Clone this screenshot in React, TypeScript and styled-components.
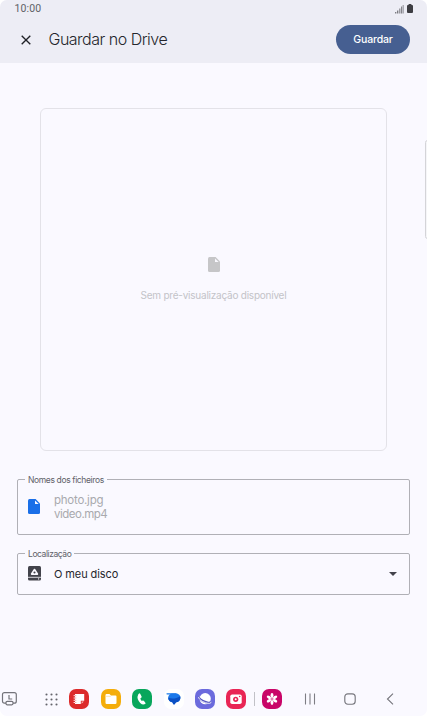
import React from 'react';
import styled, { createGlobalStyle } from 'styled-components';

interface FieldProps {
  label: string;
  height: number;
  labelSpacing: number;
  children: React.ReactNode;
}

function Field({ label, height, labelSpacing, children }: FieldProps) {
  return (
    <FieldBox $height={height}>
      <Legend $spacing={labelSpacing}>{label}</Legend>
      {children}
    </FieldBox>
  );
}

function FileIcon({ color, width, height }: { color: string; width: number; height: number }) {
  return (
    <svg width={width} height={height} viewBox="0 0 12 15" preserveAspectRatio="none">
      <path d="M1.5 0H7.6L12 4.4V13.5Q12 15 10.5 15H1.5Q0 15 0 13.5V1.5Q0 0 1.5 0Z" fill={color} />
      <path d="M7 1.4V5H10.7Z" fill="#faf9ff" />
    </svg>
  );
}

function DiskIcon() {
  return (
    <svg width="13" height="15" viewBox="0 0 13 15">
      <rect width="13" height="14.4" rx="1.5" fill="#42434b" />
      <path d="M6.5 3.7L9.2 8.1H3.8Z" fill="none" stroke="#faf9ff" strokeWidth="2" strokeLinejoin="round" />
      <circle cx="6.5" cy="6.6" r="1" fill="#42434b" />
      <path d="M0 11.3H13" stroke="#faf9ff" strokeWidth="0.8" />
      <circle cx="10.6" cy="12.9" r="0.65" fill="#faf9ff" />
    </svg>
  );
}

function StatusIcons() {
  return (
    <svg width="19" height="10" viewBox="0 0 19 10">
      <path d="M0.7 8V9.5M2.7 6.5V9.5" stroke="#77777d" strokeWidth="1.3" />
      <path d="M4.8 4.5V9.5M6.6 2.5V9.5" stroke="#85858b" strokeWidth="1.2" />
      <path d="M8.2 1V9.5" stroke="#77777d" strokeWidth="0.8" />
      <path d="M13.6 0H16.4V0.9H17Q18 0.9 18 1.9V8Q18 9 17 9H13Q12 9 12 8V1.9Q12 0.9 13 0.9H13.6Z" fill="#3d3d42" />
    </svg>
  );
}

function CaptureIcon() {
  return (
    <svg width="18" height="16" viewBox="0 0 18 16" fill="none" stroke="#74747b" strokeWidth="1.2">
      <path d="M6 12.2H4.5Q2.5 12.2 2.5 10.2V3.6Q2.5 1.6 4.5 1.6H14.3Q16.3 1.6 16.3 3.6V10.2Q16.3 12.2 14.3 12.2H13" />
      <path d="M9 4V8H12.2" />
      <rect x="6" y="10.4" width="7" height="3.4" rx="1.2" />
    </svg>
  );
}

function AppsIcon() {
  const steps = [1.2, 6.2, 11.2];
  return (
    <svg width="13" height="13" viewBox="0 0 13 13" fill="#64646b">
      {steps.map((y) => steps.map((x) => <circle key={`${x}-${y}`} cx={x + 0.3} cy={y + 0.3} r="1.05" />))}
    </svg>
  );
}

function NotesGlyph() {
  return (
    <svg width="20" height="20" viewBox="0 0 20 20">
      <path d="M6 5H15.2V11.8H11.8V15H6Z" fill="#fff" />
      <path d="M14.8 12.6H12.6V14.8Z" fill="#f7c3c1" />
      <path d="M4.6 6.7H6.4M4.6 9H6.4M4.6 11.3H6.4M4.6 13.5H6.4" stroke="#fff" strokeWidth="0.9" />
      <path d="M6.4 6.7H7.2M6.4 9H7.2M6.4 11.3H7.2M6.4 13.5H7.2" stroke="#df3333" strokeWidth="0.7" />
    </svg>
  );
}

function FilesGlyph() {
  return (
    <svg width="20" height="20" viewBox="0 0 20 20">
      <path d="M4.5 6Q4.5 5 5.5 5H8.5L10 6.5H14.5Q15.5 6.5 15.5 7.5V13.8Q15.5 15 14.3 15H5.7Q4.5 15 4.5 13.8Z" fill="#fff" />
      <path d="M5 7.3H9.5L10.3 6.5" fill="none" stroke="#f9cb65" strokeWidth="0.5" />
    </svg>
  );
}

function PhoneGlyph() {
  return (
    <svg width="20" height="20" viewBox="0 0 20 20">
      <path d="M8.2 4.8L9.6 7.5Q9.9 8.2 9.2 8.7L8.4 9.2Q8.5 10.8 9.8 12L10.8 11.6Q11.6 11.4 12 12L13.5 14.1Q13.8 14.8 13.1 15.1Q10.6 16.3 8.2 13.9Q4.2 9.7 6.2 5.6Q6.8 4.3 7.5 4.2Q8 4.2 8.2 4.8Z" fill="#fff" />
    </svg>
  );
}

function MessagesGlyph() {
  return (
    <svg width="20" height="20" viewBox="0 0 20 20">
      <path d="M3 4.8H12" stroke="#1b78ea" strokeWidth="1.2" strokeLinecap="round" />
      <rect x="4.2" y="4.4" width="12.2" height="8.8" rx="4.2" fill="#1b78ea" />
      <path d="M4.3 8.6C7.5 10.4 12.5 9.6 16.2 7.3C17 10.6 15 13.1 12.2 13.2L10.8 15.2C10.3 15.8 9.7 15.8 9.3 15.2L8 13.1C5.4 12.8 4.1 11 4.3 8.6Z" fill="#0b50c4" />
    </svg>
  );
}

function InternetGlyph() {
  return (
    <svg width="20" height="20" viewBox="0 0 20 20">
      <circle cx="10.2" cy="9.7" r="5.6" fill="#fff" />
      <path d="M4.6 7.6C3.2 8.6 5.2 10.6 8 12C11.6 13.8 15.8 14.5 15.9 12.6" fill="none" stroke="#5458c0" strokeWidth="2.1" />
      <path d="M4.4 7.4C2.6 8.2 4.2 10.7 7.8 12.6C11.8 14.6 16.4 15.2 16.2 12.8" fill="none" stroke="#f5f4ff" strokeWidth="0.9" />
    </svg>
  );
}

function CameraGlyph() {
  return (
    <svg width="20" height="20" viewBox="0 0 20 20">
      <rect x="4.3" y="5.5" width="11.4" height="9.5" rx="1.8" fill="#fff" />
      <circle cx="9.7" cy="10.3" r="2.6" fill="#e92555" />
      <circle cx="9.7" cy="10.3" r="1" fill="#fff" />
      <circle cx="13.7" cy="7.5" r="0.8" fill="#e92555" />
    </svg>
  );
}

function FlowerGlyph() {
  return (
    <svg width="20" height="20" viewBox="0 0 20 20">
      {[0, 60, 120, 180, 240, 300].map((angle) => (
        <ellipse key={angle} cx="10" cy="6.4" rx="1.45" ry="2.3" fill="#fff" transform={`rotate(${angle} 10 10)`} />
      ))}
      <path d="M10 7V13M7.4 8.5L12.6 11.5M12.6 8.5L7.4 11.5" stroke="#fff" strokeWidth="0.9" />
      <circle cx="10" cy="10" r="0.8" fill="#c90568" />
    </svg>
  );
}

function App() {
  return (
    <Screen>
      <GlobalStyle />
      <Header>
        <StatusBar>
          <Clock>10:00</Clock>
          <StatusIcons />
        </StatusBar>
        <TitleBar>
          <CloseButton aria-label="Fechar">
            <svg width="10" height="10" viewBox="0 0 10 10">
              <path d="M0.7 0.7L9.3 9.3M9.3 0.7L0.7 9.3" stroke="#202127" strokeWidth="1.35" />
            </svg>
          </CloseButton>
          <Title>Guardar no Drive</Title>
          <SaveButton>Guardar</SaveButton>
        </TitleBar>
      </Header>
      <Content>
        <Preview>
          <FileIcon color="#c6c6c8" width={12} height={15} />
          <PreviewText>Sem pré-visualização disponível</PreviewText>
        </Preview>
        <Form>
          <Field label="Nomes dos ficheiros" height={56} labelSpacing={-0.36}>
            <IconSlot><FileIcon color="#1a6fe8" width={12} height={15} /></IconSlot>
            <FileNames>
              <FileName $spacing={-0.25}>photo.jpg</FileName>
              <FileName $spacing={-0.5}>video.mp4</FileName>
            </FileNames>
          </Field>
          <Field label="Localização" height={42} labelSpacing={-0.42}>
            <IconSlot><DiskIcon /></IconSlot>
            <Location>O meu disco</Location>
            <svg width="8" height="4" viewBox="0 0 8 4">
              <path d="M0 0H8L4 4Z" fill="#42434b" />
            </svg>
          </Field>
        </Form>
        <EdgePanel />
      </Content>
      <NavBar>
        <CaptureIcon />
        <Spacer $width={27} />
        <AppsIcon />
        <Spacer $width={11.3} />
        <Dock>
          <AppTile $color="#dc2b2b"><NotesGlyph /></AppTile>
          <AppTile $color="#f4ad0b"><FilesGlyph /></AppTile>
          <AppTile $color="#08a65c"><PhoneGlyph /></AppTile>
          <AppTile $color="#ffffff"><MessagesGlyph /></AppTile>
          <AppTile $color="#6b6add"><InternetGlyph /></AppTile>
          <AppTile $color="#e92555"><CameraGlyph /></AppTile>
        </Dock>
        <Divider />
        <AppTile $color="#c90568"><FlowerGlyph /></AppTile>
        <Spacer $width={22} />
        <svg width="12" height="12" viewBox="0 0 12 12">
          <path d="M1.5 0.5V11.5M6 0.5V11.5M10.5 0.5V11.5" stroke="#7e7e84" strokeWidth="1.1" />
        </svg>
        <Spacer $width={28} />
        <svg width="12" height="12" viewBox="0 0 12 12">
          <rect x="0.8" y="0.8" width="10.4" height="10.4" rx="3" fill="none" stroke="#77777e" strokeWidth="1.15" />
        </svg>
        <Spacer $width={30} />
        <svg width="8" height="12" viewBox="0 0 8 12">
          <path d="M7 0.7L1.5 6L7 11.3" fill="none" stroke="#77777e" strokeWidth="1.15" />
        </svg>
      </NavBar>
    </Screen>
  );
}

export default App;

const GlobalStyle = createGlobalStyle`
  * {
    box-sizing: border-box;
  }

  body {
    margin: 0;
    background: white;
  }

  svg {
    display: block;
    flex-shrink: 0;
  }
`;

const Screen = styled.div`
  display: flex;
  flex-direction: column;

  width: 427px;
  height: 716px;
  overflow: hidden;

  border-radius: 7px;
  background: #faf9ff;
  color: #25262c;
  font-family: 'Open Sans', 'Noto Sans', sans-serif;
`;

const Header = styled.header`
  height: 62.5px;
  background: #ededf5;
`;

const StatusBar = styled.div`
  display: flex;
  align-items: center;
  justify-content: space-between;

  height: 17px;
  padding: 0 13px 0 14.5px;
`;

const Clock = styled.span`
  color: #606167;
  font-family: Roboto, sans-serif;
  font-size: 10.5px;
  letter-spacing: 0.1px;
`;

const TitleBar = styled.div`
  display: flex;
  align-items: center;

  height: 45px;
  padding: 0 17px 0 21px;
`;

const CloseButton = styled.button`
  display: flex;

  padding: 0;
  border: none;
  background: none;
`;

const Title = styled.h1`
  flex: 1;

  margin: -2px 0 0 17.5px;

  font-family: Inter, sans-serif;
  font-size: 16px;
  font-weight: 300;
  letter-spacing: -0.5px;
`;

const SaveButton = styled.button`
  width: 74px;
  height: 29px;
  padding: 0;

  border: none;
  border-radius: 15px;
  background: #465f91;
  color: white;
  font-family: Inter, sans-serif;
  font-size: 10.5px;
  font-weight: 500;
  letter-spacing: -0.15px;
`;

const Content = styled.main`
  position: relative;
  flex: 1;

  padding: 45.5px 17px 0;
`;

const Preview = styled.section`
  display: flex;
  flex-direction: column;
  align-items: center;

  height: 343px;
  margin: 0 23px;
  padding-top: 148px;

  border: 1px solid #e3e2e8;
  border-radius: 6px;
`;

const PreviewText = styled.p`
  margin: 16px 0 0;

  color: #c3c3c8;
  font-family: Inter, sans-serif;
  font-size: 10px;
  line-height: 14px;
  letter-spacing: -0.23px;
`;

const Form = styled.form`
  display: flex;
  flex-direction: column;
  gap: 18px;

  margin-top: 28px;
`;

const FieldBox = styled.div<{ $height: number }>`
  position: relative;

  display: flex;
  align-items: center;

  height: ${({ $height }) => $height}px;
  padding: 0 12px 0 10px;

  border: 1px solid #b0b0b6;
  border-radius: 2px;
`;

const Legend = styled.span<{ $spacing: number }>`
  position: absolute;
  top: -6px;
  left: 7px;

  padding: 0 3px;

  background: #faf9ff;
  color: #606168;
  font-family: Inter, sans-serif;
  font-size: 8.5px;
  line-height: 12px;
  letter-spacing: ${({ $spacing }) => $spacing}px;
`;

const IconSlot = styled.div`
  display: flex;

  width: 26px;
  margin-bottom: 1px;
`;

const FileNames = styled.div`
  color: #a9a9ae;
  font-family: Inter, sans-serif;
  font-size: 11.5px;
  line-height: 14px;
`;

const FileName = styled.div<{ $spacing: number }>`
  letter-spacing: ${({ $spacing }) => $spacing}px;
`;

const Location = styled.div`
  flex: 1;

  font-family: Inter, sans-serif;
  font-size: 11px;
  letter-spacing: -0.1px;
`;

const EdgePanel = styled.div`
  position: absolute;
  top: 77px;
  right: -3px;

  width: 5px;
  height: 99px;

  border: 1px solid #d4d4d8;
  border-radius: 3px;
  background: #f5f5f8;
`;

const NavBar = styled.nav`
  display: flex;
  align-items: center;

  height: 34px;
`;

const Dock = styled.div`
  display: flex;
  gap: 11.45px;
`;

const AppTile = styled.div<{ $color: string }>`
  flex-shrink: 0;

  width: 20px;
  height: 20px;

  border-radius: 7px;
  background: ${({ $color }) => $color};
`;

const Spacer = styled.div<{ $width: number }>`
  flex-shrink: 0;

  width: ${({ $width }) => $width}px;
`;

const Divider = styled.div`
  width: 1px;
  height: 14px;
  margin: 0 7.5px;

  background: #c1c1c7;
`;
